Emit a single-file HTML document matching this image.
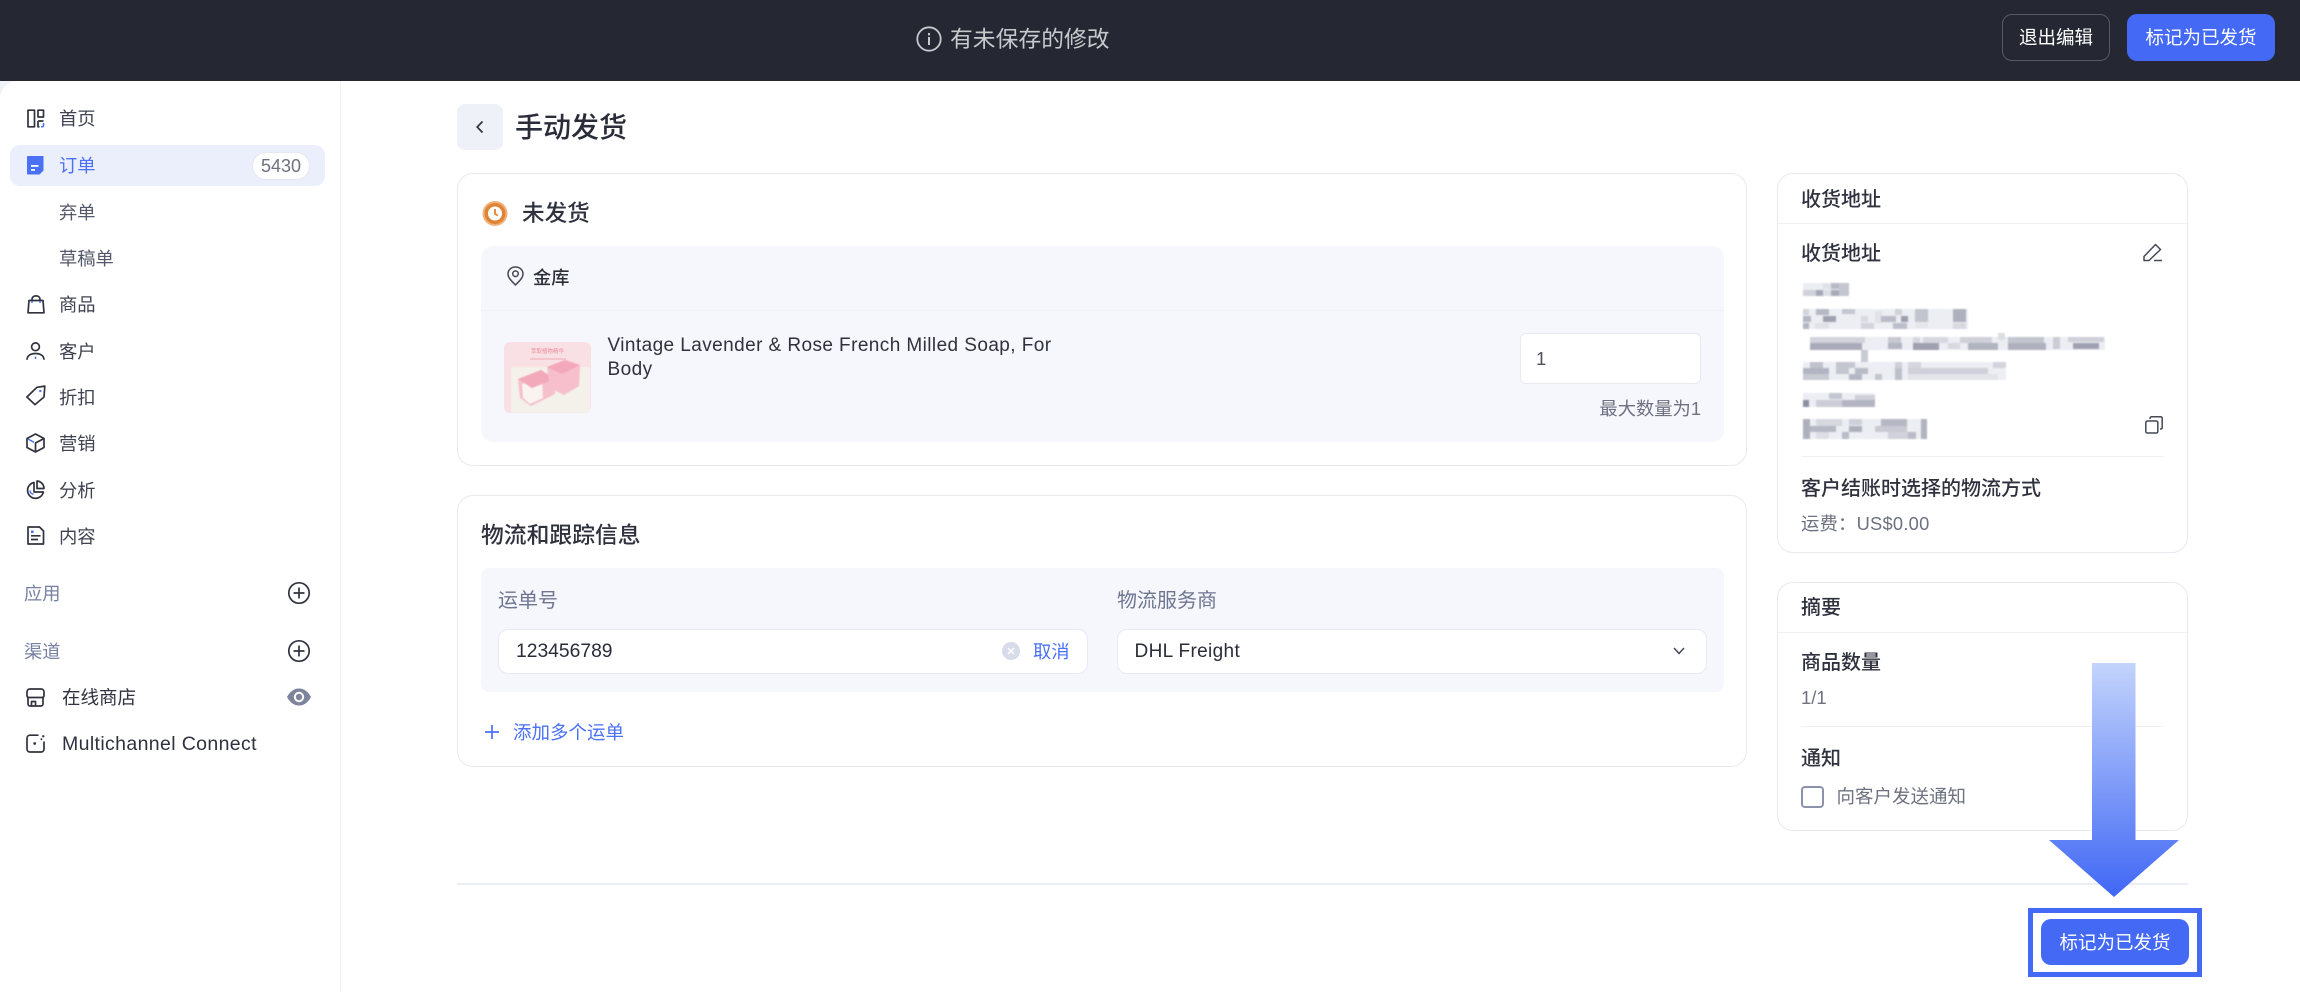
<!DOCTYPE html>
<html lang="zh"><head><meta charset="utf-8"><title>手动发货</title>
<style>
*{box-sizing:border-box}
html,body{margin:0;padding:0;width:2300px;height:992px;overflow:hidden;background:#fff}
body{font-family:"Liberation Sans","Noto Sans CJK SC",sans-serif;color:#2c2f3a;position:relative}
.a{position:absolute}
.t{position:absolute;white-space:nowrap;line-height:30px;height:30px;margin-top:1px}
.nav{font-size:18.3px;color:#3f4250}
.h{font-weight:500}
.card{position:absolute;background:#fff;border:1.5px solid #e7e9f3;border-radius:16px}
.panel{position:absolute;background:#f6f7fc}
.inp{position:absolute;background:#fff;border:1.5px solid #e7e9f3;border-radius:10px}
.line{position:absolute;background:#eff0f6;height:1px}
svg{position:absolute;overflow:visible}
.ic{fill:none;stroke:#30333f;stroke-width:1.7;stroke-linejoin:round}
.bl{fill:none;stroke:#4a70f5;stroke-width:1.5}
.blue{color:#4a70f5}
.gray{color:#6d7180}
.btn{position:absolute;background:#4369f5;border-radius:10px;color:#fff;font-size:18.5px;text-align:center}
</style></head><body>

<!-- top bar -->
<div class="a" style="left:0;top:0;width:2300px;height:81px;background:#252833"></div>
<svg style="left:916px;top:26px" width="26" height="26" viewBox="0 0 26 26"><circle cx="13" cy="13" r="11.7" fill="none" stroke="#c8c9cd" stroke-width="1.8"/><rect x="12" y="11" width="2" height="8" fill="#c8c9cd"/><rect x="12" y="7" width="2" height="2.4" fill="#c8c9cd"/></svg>
<div class="t" style="left:950px;top:23px;font-size:22.8px;color:#c8c9cd">有未保存的修改</div>
<div class="a" style="left:2002px;top:14px;width:108px;height:47px;border:1.5px solid #565967;border-radius:10px;color:#fff;font-size:18.5px;line-height:45px;text-align:center">退出编辑</div>
<div class="btn" style="left:2127px;top:14px;width:148px;height:47px;line-height:48px">标记为已发货</div>

<!-- sidebar -->
<div class="a" style="left:0;top:81px;width:341px;height:911px;border-right:1.5px solid #eef0f7"></div>
<svg style="left:0;top:81px" width="18" height="18" viewBox="0 0 18 18"><path d="M0 0H18C8 0 0 8 0 18Z" fill="#f1f3fb"/></svg>
<div class="a" style="left:10px;top:145px;width:315px;height:41px;background:#ebeffc;border-radius:10px"></div>

<svg style="left:27px;top:109px" width="18" height="19" viewBox="0 0 18 19"><path class="ic" d="M1 1.200H7.500V17.800H1ZM11 1.200H16.500V8H11Z"/><path class="ic" d="M11 12H16.500M11 12V17.800H12.500"/><path class="bl" d="M16.500 14V16.500C16.500 17.300 15.800 17.800 15 17.800H14"/></svg>
<div class="t nav" style="left:59px;top:103px">首页</div>

<svg style="left:27px;top:156px" width="18" height="19" viewBox="0 0 18 19"><path d="M0 1A1 1 0 0 1 1 0H16.500V14.500L12.500 18.500H1A1 1 0 0 1 0 17.500Z" fill="#4a70f5"/><rect x="4" y="9" width="7.500" height="1.800" fill="#fff"/><rect x="4" y="13" width="4" height="1.800" fill="#fff"/></svg>
<div class="t nav blue" style="left:59px;top:150px">订单</div>
<div class="a" style="left:252px;top:152px;width:58px;height:28px;background:#fff;border:1px solid #e5e7f2;border-radius:14px;font-size:18px;line-height:27px;text-align:center;color:#6d7180">5430</div>

<div class="t nav" style="left:59px;top:197px;color:#55586a">弃单</div>
<div class="t nav" style="left:59px;top:243px;color:#55586a">草稿单</div>

<svg style="left:27px;top:295px" width="18" height="19" viewBox="0 0 18 19"><path class="ic" d="M2 5.500H16L17 17.800H1Z"/><path class="ic" d="M5 5.500V4.200C5 2.200 6.800.9 9 .9S13 2.200 13 4.200V5.500"/><path class="bl" d="M5 6V8M13 6V8" stroke-width="1.200"/></svg>
<div class="t nav" style="left:59px;top:289px">商品</div>

<svg style="left:26px;top:342px" width="19" height="19" viewBox="0 0 19 19"><circle class="ic" cx="9.500" cy="4.800" r="3.900"/><path class="ic" d="M1 17.800C1 13.600 4.800 11.500 9.500 11.500S18 13.600 18 17.800"/><path class="bl" d="M9.500 14.500V17" stroke-width="1.400"/></svg>
<div class="t nav" style="left:59px;top:336px">客户</div>

<svg style="left:26px;top:385px" width="20" height="21" viewBox="0 0 20 21"><path class="ic" d="M.9 12L11 2.300L18.800 1.100L18 12L9 19.600Z"/><circle cx="14.300" cy="6" r="1.200" fill="#4a70f5"/></svg>
<div class="t nav" style="left:59px;top:382px">折扣</div>

<svg style="left:26px;top:433px" width="19" height="20" viewBox="0 0 19 20"><path class="ic" d="M9.500 1L18 5.500V14.500L9.500 19L1 14.500V5.500Z"/><path class="ic" d="M18 5.500L9.500 10V19"/><path class="bl" d="M2 6L8 9.300"/></svg>
<div class="t nav" style="left:59px;top:428px">营销</div>

<svg style="left:26px;top:480px" width="19" height="19" viewBox="0 0 19 19"><path class="ic" d="M8 2.500A8 8 0 1 0 17.400 12H8Z"/><path class="ic" d="M11 1A7.500 7.500 0 0 1 18 8.500H11Z"/><path class="bl" d="M4 10.500C4 12.500 5.500 14 7.500 14.300"/></svg>
<div class="t nav" style="left:59px;top:475px">分析</div>

<svg style="left:27px;top:526px" width="18" height="19" viewBox="0 0 18 19"><path class="ic" d="M1 1H12.500L16.500 5V18H1Z"/><rect x="4" y="4.500" width="2.600" height="2.600" fill="#4a70f5"/><path class="ic" d="M4 9.800H13.500M4 13.500H11"/></svg>
<div class="t nav" style="left:59px;top:521px">内容</div>

<div class="t" style="left:24px;top:578px;font-size:18.300px;color:#7680a3">应用</div>
<svg style="left:288px;top:582px" width="22" height="22" viewBox="0 0 22 22"><circle class="ic" cx="11" cy="11" r="10.200"/><path class="ic" d="M5.500 11H16.500M11 5.500V16.500"/></svg>
<div class="t" style="left:24px;top:636px;font-size:18.300px;color:#7680a3">渠道</div>
<svg style="left:288px;top:640px" width="22" height="22" viewBox="0 0 22 22"><circle class="ic" cx="11" cy="11" r="10.200"/><path class="ic" d="M5.500 11H16.500M11 5.500V16.500"/></svg>

<svg style="left:26px;top:688px" width="19" height="19" viewBox="0 0 19 19"><path class="ic" d="M4 1H15C16.800 1 18 2.300 18 4V7.500C18 9 17 9.500 16 9.500H3C2 9.500 1 9 1 7.500V4C1 2.300 2.200 1 4 1Z"/><path class="ic" d="M2 9.500V15.800C2 17 3 18 4 18H15C16 18 17 17 17 15.800V9.500M5.500 18V13.500H9.500V18"/></svg>
<div class="t nav" style="left:62px;top:682px;color:#2f323e;font-size:18.500px">在线商店</div>
<svg style="left:287px;top:688px" width="24" height="18" viewBox="0 0 24 18"><path d="M0 9C3 3.500 7 .5 12 .5S21 3.500 24 9C21 14.500 17 17.500 12 17.500S3 14.500 0 9Z" fill="#7d849c"/><circle cx="12" cy="9" r="5.200" fill="#fff"/><circle cx="12" cy="9" r="3.200" fill="#7d849c"/></svg>

<svg style="left:26px;top:734px" width="20" height="19" viewBox="0 0 20 19"><path class="ic" d="M12.500 1.200H4C2.300 1.200 1 2.500 1 4.200V15C1 16.700 2.300 18 4 18H15C16.700 18 18 16.700 18 15V7.500"/><circle cx="8.700" cy="9.500" r="1.400" fill="#30333f"/><path class="ic" d="M14.800 5.800L16 4.600"/><circle cx="17.300" cy="2.300" r="1.200" fill="#30333f"/></svg>
<div class="t" style="left:62px;top:728px;font-size:19.500px;color:#2f323e;letter-spacing:.37px">Multichannel Connect</div>

<!-- title -->
<div class="a" style="left:457px;top:104px;width:46px;height:46px;background:#eef1f8;border-radius:8px"></div>
<svg style="left:475px;top:120px" width="10" height="14" viewBox="0 0 10 14"><path d="M7.500 1.500L2.200 7L7.500 12.500" fill="none" stroke="#30333f" stroke-width="1.700"/></svg>
<div class="t h" style="left:515px;top:112px;font-size:28px;color:#2a2d39">手动发货</div>

<!-- card 1 -->
<div class="card" style="left:457px;top:173px;width:1290px;height:293px"></div>
<svg style="left:482px;top:201px" width="26" height="26" viewBox="0 0 26 26"><circle cx="13" cy="12.500" r="12.500" fill="#f0b27a"/><circle cx="13" cy="12.500" r="10.500" fill="#df8434"/><circle cx="13" cy="12.500" r="7" fill="#fff"/><path d="M13 8V13L16 14.500" fill="none" stroke="#df8434" stroke-width="1.800"/></svg>
<div class="t h" style="left:522px;top:198px;font-size:22.600px;color:#2f323e">未发货</div>

<div class="panel" style="left:481px;top:246px;width:1243px;height:196px;border-radius:12px"></div>
<div class="line" style="left:481px;top:310px;width:1243px;background:#f0f1f8"></div>
<svg style="left:507px;top:266px" width="17" height="20" viewBox="0 0 17 20"><path d="M8.500 19C4 14.500 1 11.500 1 8C1 3.800 4.300 1 8.500 1S16 3.800 16 8C16 11.500 13 14.500 8.500 19Z" fill="none" stroke="#454855" stroke-width="1.500"/><circle cx="8.500" cy="7.800" r="2.800" fill="none" stroke="#454855" stroke-width="1.500"/></svg>
<div class="t h" style="left:533px;top:262px;font-size:18.200px">金库</div>

<!-- thumbnail -->
<div class="a" style="left:504px;top:342px;width:87px;height:71px;background:#f9e0e4;border-radius:6px;overflow:hidden">
  <div class="a" style="left:0;right:0;top:6px;text-align:center;font-size:5.500px;line-height:8px;color:#ea8d9c;white-space:nowrap">萃取植物精华</div>
  <div class="a" style="left:26px;top:16px;width:36px;height:2px;background:#f4c5cd"></div>
  <svg style="left:0;top:0;filter:blur(.5px)" width="87" height="71" viewBox="0 0 87 71">
    <rect x="7" y="25" width="79" height="46" fill="#f4f0ea"/>
    <path d="M14 37L37 28L51 37L51 52L27 64L16 56Z" fill="#f5bfcb"/>
    <path d="M18 42L38 34L39 56L26 62L19 56Z" fill="#fbf3ef"/>
    <path d="M14 37L37 28L51 37L28 46Z" fill="#f2a9ba"/>
    <path d="M43 25L61 18L76 23L75 44L60 53L46 46Z" fill="#f7bfcc"/>
    <path d="M43 25L61 18L76 23L58 32Z" fill="#f4a8bb"/>
  </svg>
</div>
<div class="a" style="left:607.500px;top:333px;width:480px;font-size:19px;line-height:23.500px;color:#2f323e;letter-spacing:.42px;white-space:nowrap;margin-top:1px">Vintage Lavender &amp; Rose French Milled Soap, For<br>Body</div>

<div class="inp" style="left:1520px;top:333px;width:181px;height:51px;border-radius:6px"></div>
<div class="t" style="left:1536px;top:343px;font-size:18.500px;color:#4e5160">1</div>
<div class="t gray" style="right:599px;top:393px;font-size:18.300px">最大数量为1</div>

<!-- card 2 -->
<div class="card" style="left:457px;top:495px;width:1290px;height:272px"></div>
<div class="t h" style="left:481px;top:519px;font-size:22.800px;color:#2f323e">物流和跟踪信息</div>
<div class="panel" style="left:481px;top:568px;width:1243px;height:124px;border-radius:8px"></div>
<div class="t" style="left:498px;top:585px;font-size:20px;color:#6e7690">运单号</div>
<div class="t" style="left:1117px;top:585px;font-size:20px;color:#6e7690">物流服务商</div>
<div class="inp" style="left:498px;top:629px;width:590px;height:45px"></div>
<div class="t" style="left:516px;top:636px;font-size:19.300px;color:#2a2d39">123456789</div>
<svg style="left:1002px;top:642px" width="18" height="18" viewBox="0 0 18 18"><circle cx="9" cy="9" r="9" fill="#d8dbe8"/><path d="M6 6L12 12M12 6L6 12" stroke="#fff" stroke-width="1.500"/></svg>
<div class="t blue" style="left:1033px;top:636px;font-size:18.300px">取消</div>
<div class="inp" style="left:1117px;top:629px;width:590px;height:45px"></div>
<div class="t" style="left:1134.500px;top:636px;font-size:19px;color:#2a2d39;letter-spacing:.35px">DHL Freight</div>
<svg style="left:1673px;top:647px" width="12" height="8" viewBox="0 0 12 8"><path d="M1 1L6 6.500L11 1" fill="none" stroke="#454855" stroke-width="1.500"/></svg>
<svg style="left:485px;top:725px" width="14" height="14" viewBox="0 0 14 14"><path d="M7 0V14M0 7H14" stroke="#4a70f5" stroke-width="1.700"/></svg>
<div class="t blue" style="left:513px;top:717px;font-size:18.500px">添加多个运单</div>

<!-- right card 1 -->
<div class="card" style="left:1777px;top:173px;width:411px;height:380px"></div>
<div class="t h" style="left:1801px;top:184px;font-size:20px;color:#2f323e">收货地址</div>
<div class="line" style="left:1778px;top:223px;width:409px"></div>
<div class="t h" style="left:1801px;top:238px;font-size:20px;color:#2f323e">收货地址</div>
<svg style="left:2143px;top:243px" width="20" height="19" viewBox="0 0 20 19"><path d="M1 17.500V13.500L12.500 1.500L17.500 6.500L6 17.500Z" fill="none" stroke="#454855" stroke-width="1.500" stroke-linejoin="round"/><path d="M11 17.500H19" stroke="#454855" stroke-width="1.500"/></svg>

<!-- mosaic -->
<svg style="left:1803px;top:283px;filter:blur(.7px)" width="302" height="158" viewBox="0 0 302 158">
<g fill="#eceef3">
<rect x="0" y="0" width="46" height="13"/>
<rect x="0" y="26" width="165" height="20"/>
<rect x="7" y="54" width="295" height="13"/>
<rect x="0" y="79" width="203" height="18"/>
<rect x="0" y="110" width="72" height="14"/>
<rect x="0" y="136" width="124" height="20"/>
</g>
<g fill="#c4c6d0">
<rect x="20" y="0" width="8" height="6" fill="#e0e1e8"/><rect x="28" y="0" width="8" height="6" fill="#b8bac6"/><rect x="36" y="0" width="10" height="13" fill="#c4c6d0"/>
<rect x="0" y="7" width="13" height="6" fill="#d0d1da"/><rect x="13" y="7" width="7" height="6" fill="#a7a9b7"/><rect x="20" y="7" width="8" height="6" fill="#dedfe6"/><rect x="28" y="7" width="8" height="6" fill="#a9abb9"/>
<rect x="0" y="26" width="6" height="6" fill="#d3d4dc"/><rect x="13" y="26" width="13" height="6" fill="#b5b7c3"/><rect x="39" y="26" width="13" height="5" fill="#c4c6d0"/><rect x="72" y="28" width="7" height="12" fill="#e2e3e9"/><rect x="92" y="26" width="7" height="6" fill="#d0d1da"/><rect x="112" y="26" width="13" height="13" fill="#c2c4ce"/><rect x="150" y="26" width="13" height="13" fill="#aeb0bd"/>
<rect x="0" y="33" width="8" height="6" fill="#b4b6c3"/><rect x="20" y="33" width="13" height="6" fill="#9fa1b0"/><rect x="58" y="33" width="7" height="6" fill="#d9dae1"/><rect x="78" y="33" width="15" height="6" fill="#b9bbc7"/><rect x="98" y="33" width="7" height="6" fill="#9c9eae"/>
<rect x="0" y="40" width="6" height="6" fill="#b4b6c3"/><rect x="12" y="40" width="14" height="6" fill="#e1e2e8"/><rect x="58" y="40" width="13" height="6" fill="#d3d4dc"/><rect x="90" y="40" width="14" height="6" fill="#bcbec9"/><rect x="112" y="40" width="13" height="5" fill="#e5e6eb"/><rect x="150" y="40" width="13" height="6" fill="#d8d9e0"/>
<rect x="7" y="54" width="55" height="6" fill="#d2d3dc"/><rect x="85" y="54" width="13" height="6" fill="#c7c8d2"/><rect x="110" y="54" width="7" height="6" fill="#d5d6de"/><rect x="120" y="54" width="25" height="6" fill="#d6d7df"/><rect x="157" y="54" width="32" height="6" fill="#cfd0d9"/><rect x="195" y="50" width="7" height="7" fill="#dcdde4"/><rect x="205" y="54" width="36" height="6" fill="#c3c5cf"/><rect x="250" y="54" width="7" height="12" fill="#cbccd6"/><rect x="265" y="54" width="36" height="5" fill="#cfd0d9"/>
<rect x="7" y="60" width="52" height="7" fill="#a9abba"/><rect x="85" y="60" width="14" height="6" fill="#b3b5c2"/><rect x="110" y="60" width="26" height="7" fill="#9fa1b1"/><rect x="145" y="60" width="12" height="6" fill="#d8d9e0"/><rect x="165" y="60" width="30" height="7" fill="#b1b3bf"/><rect x="205" y="60" width="38" height="7" fill="#aeb0bd"/><rect x="270" y="60" width="26" height="6" fill="#9fa1b1"/>
<rect x="58" y="67" width="7" height="12" fill="#c9cad4"/>
<rect x="7" y="79" width="13" height="6" fill="#bfc1cb"/><rect x="33" y="79" width="19" height="6" fill="#c3c5cf"/><rect x="92" y="79" width="7" height="6" fill="#cfd0d9"/><rect x="105" y="79" width="13" height="6" fill="#d5d6de"/><rect x="190" y="79" width="13" height="6" fill="#d3d4dc"/>
<rect x="0" y="85" width="26" height="6" fill="#b2b4c1"/><rect x="33" y="85" width="13" height="6" fill="#c3c5cf"/><rect x="52" y="85" width="13" height="6" fill="#b8bac6"/><rect x="92" y="85" width="7" height="12" fill="#bcbec9"/><rect x="105" y="85" width="80" height="6" fill="#cfd0d9"/>
<rect x="0" y="91" width="26" height="6" fill="#c8c9d3"/><rect x="46" y="91" width="13" height="6" fill="#b4b6c3"/><rect x="72" y="91" width="7" height="6" fill="#c3c5cf"/><rect x="105" y="91" width="90" height="6" fill="#e3e4ea"/>
<rect x="26" y="110" width="13" height="6" fill="#c4c6d0"/><rect x="52" y="112" width="20" height="5" fill="#cfd0d9"/>
<rect x="0" y="117" width="6" height="7" fill="#8c8fa1"/><rect x="13" y="117" width="26" height="7" fill="#cccdd7"/><rect x="39" y="117" width="33" height="7" fill="#b3b5c2"/>
<rect x="0" y="136" width="7" height="20" fill="#aeb0bd"/><rect x="13" y="136" width="26" height="7" fill="#d6d7df"/><rect x="46" y="136" width="13" height="6" fill="#cfd0d9"/><rect x="78" y="136" width="26" height="7" fill="#b5b7c3"/><rect x="118" y="136" width="6" height="20" fill="#b1b3bf"/>
<rect x="7" y="143" width="26" height="6" fill="#b5b7c3"/><rect x="46" y="143" width="13" height="6" fill="#aeb0bd"/><rect x="72" y="143" width="32" height="6" fill="#c8c9d3"/>
<rect x="13" y="149" width="13" height="7" fill="#dddee5"/><rect x="39" y="149" width="7" height="7" fill="#b9bbc7"/><rect x="85" y="149" width="20" height="7" fill="#d0d1da"/><rect x="105" y="149" width="8" height="7" fill="#b9bbc7"/>
</g></svg>

<svg style="left:2145px;top:416px" width="18" height="18" viewBox="0 0 18 18"><rect x=".8" y="5" width="12" height="12" rx="1.500" fill="none" stroke="#454855" stroke-width="1.500"/><path d="M5 3V2.500C5 1.500 5.700.8 6.500.8H15.500C16.500.8 17.200 1.500 17.200 2.500V11.500C17.200 12.500 16.500 13 15.500 13H15" fill="none" stroke="#454855" stroke-width="1.500"/></svg>
<div class="line" style="left:1802px;top:456px;width:362px"></div>
<div class="t h" style="left:1801px;top:473px;font-size:20px;color:#2f323e">客户结账时选择的物流方式</div>
<div class="t gray" style="left:1801px;top:508px;font-size:18.300px;letter-spacing:.25px">运费：US$0.00</div>

<!-- right card 2 -->
<div class="card" style="left:1777px;top:582px;width:411px;height:249px"></div>
<div class="t h" style="left:1801px;top:592px;font-size:20px;color:#2f323e">摘要</div>
<div class="line" style="left:1778px;top:632px;width:409px"></div>
<div class="t h" style="left:1801px;top:647px;font-size:20px;color:#2f323e">商品数量</div>
<div class="t gray" style="left:1801px;top:682px;font-size:18.500px">1/1</div>
<div class="line" style="left:1801px;top:726px;width:363px"></div>
<div class="t h" style="left:1801px;top:743px;font-size:20px;color:#2f323e">通知</div>
<div class="a" style="left:1801px;top:786px;width:23px;height:22px;border:2px solid #8c92ab;border-radius:4px;background:#fff"></div>
<div class="t gray" style="left:1836.500px;top:781px;font-size:18.500px">向客户发送通知</div>

<!-- footer -->
<div class="a" style="left:457px;top:883px;width:1731px;height:1.500px;background:#eceef5"></div>
<div class="btn" style="left:2041px;top:919px;width:148px;height:46px;line-height:47px">标记为已发货</div>
<div class="a" style="left:2028px;top:908px;width:174px;height:69px;border:5px solid #4369f5"></div>
<svg style="left:2049px;top:663px" width="130" height="234" viewBox="0 0 130 234"><defs><linearGradient id="g" x1="0" y1="0" x2="0" y2="1"><stop offset="0" stop-color="#c3d4fc"/><stop offset="1" stop-color="#4067f5"/></linearGradient></defs><path d="M43 0H86.500V177H130L65 234L0 177H43Z" fill="url(#g)"/></svg>
</body></html>
